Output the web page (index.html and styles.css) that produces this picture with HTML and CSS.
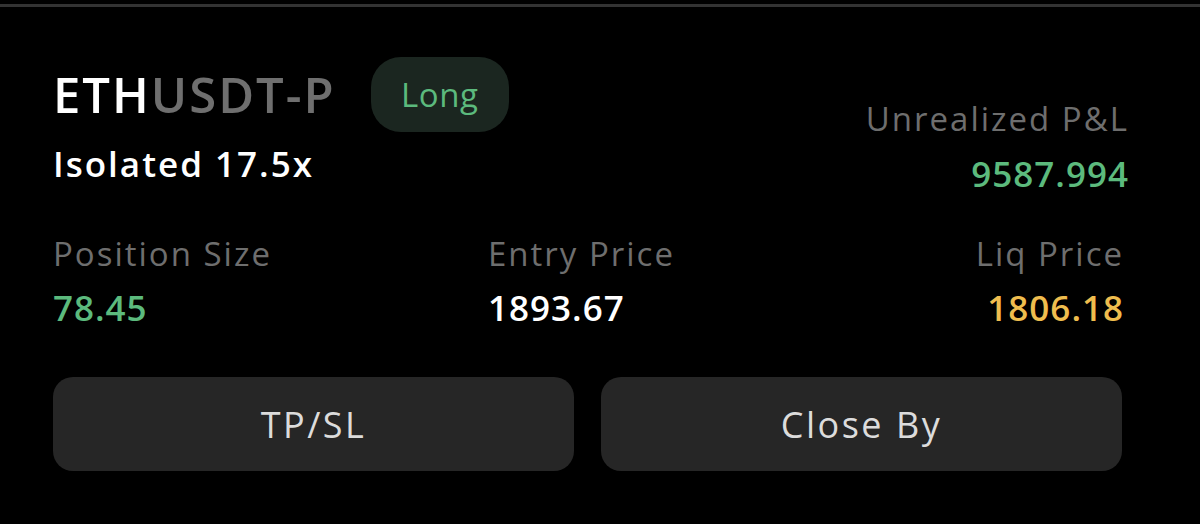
FILE: index.html
```html
<!DOCTYPE html>
<html lang="en">
<head>
  <meta charset="UTF-8">
  <meta name="viewport" content="width=device-width, initial-scale=1.0">
  <title>ETHUSDT-P Position</title>
  <link rel="stylesheet" href="styles.css">
</head>
<body>

<div class="topline"></div>

<div class="card">
  <div class="header">
    <div class="symbol">
      <div class="title-row">
        <h2 class="title">ETH<span class="quote">USDT-P</span></h2>
        <span class="badge">Long</span>
      </div>
      <p class="margin-mode">Isolated 17.5x</p>
    </div>
    <div class="pnl">
      <p class="label">Unrealized P&amp;L</p>
      <p class="value green">9587.994</p>
    </div>
  </div>

  <div class="stats">
    <div class="stat">
      <p class="label">Position Size</p>
      <p class="value green">78.45</p>
    </div>
    <div class="stat">
      <p class="label">Entry Price</p>
      <p class="value">1893.67</p>
    </div>
    <div class="stat right">
      <p class="label">Liq Price</p>
      <p class="value yellow">1806.18</p>
    </div>
  </div>

  <div class="actions">
    <button>TP/SL</button>
    <button>Close By</button>
  </div>
</div>

</body>
</html>
```

FILE: styles.css
```css
body {
  margin: 0;
  background-color: #000;
  font-family: "Open Sans", "Noto Sans", sans-serif;
  color: #fff;
}
p, h2 {
  margin: 0;
}
.topline {
  margin-top: 4px;
  height: 3px;
  background-color: #333;
}
.card {
  padding: 50px 78px 0 53px;
}
.header {
  display: flex;
  justify-content: space-between;
}
.title-row {
  display: flex;
  align-items: center;
  gap: 35px;
}
.title {
  font-size: 49px;
  font-weight: 600;
  line-height: 75px;
  letter-spacing: 2px;
}
.quote {
  color: #6f6f6f;
}
.badge {
  display: inline-flex;
  align-items: center;
  justify-content: center;
  width: 138px;
  height: 75px;
  border-radius: 30px;
  background-color: #1b2620;
  color: #5cba7d;
  font-size: 33px;
  font-weight: 500;
  letter-spacing: 0.5px;
}
.margin-mode {
  margin-top: 12px;
  font-size: 35px;
  font-weight: 600;
  line-height: 40px;
  letter-spacing: 2px;
}
.pnl {
  margin-top: 42px;
  margin-right: -7px;
  text-align: right;
}
.label {
  color: #6e6e6e;
  font-size: 33px;
  line-height: 40px;
  letter-spacing: 2px;
}
.value {
  margin-top: 15px;
  font-size: 35px;
  font-weight: 600;
  line-height: 40px;
  letter-spacing: 1px;
}
.stat .value {
  margin-top: 14px;
}
.green {
  color: #5cba7d;
}
.yellow {
  color: #efbd4e;
}
.stats {
  display: grid;
  grid-template-columns: 435px 1fr auto;
  margin-top: 40px;
}
.right {
  text-align: right;
  margin-right: -2px;
}
.actions {
  display: grid;
  grid-template-columns: 1fr 1fr;
  gap: 27px;
  margin-top: 49px;
}
button {
  height: 94px;
  border: none;
  border-radius: 20px;
  background-color: #262626;
  color: #dcdcdc;
  font-family: "Open Sans", "Noto Sans", sans-serif;
  font-size: 36px;
  letter-spacing: 2.5px;
}
```
